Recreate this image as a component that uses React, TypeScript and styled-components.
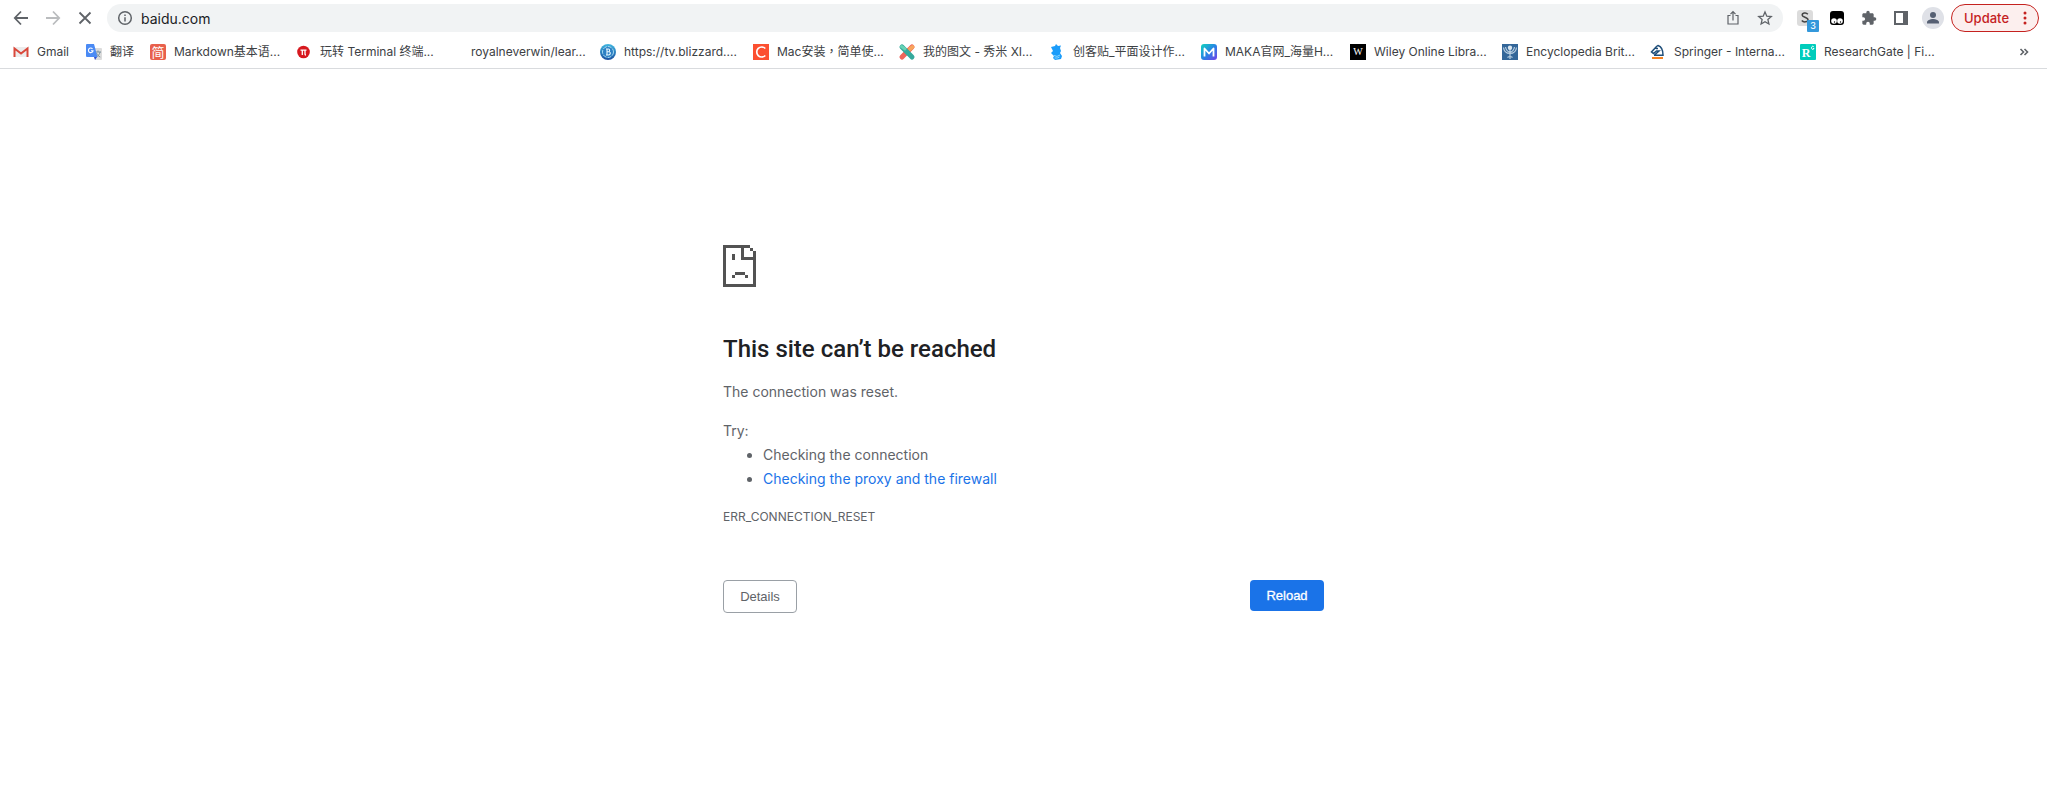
import React from "react";
import styled, { createGlobalStyle, css } from "styled-components";

const uiFont = `Inter, "Noto Sans CJK TC", sans-serif`;

const GlobalStyle = createGlobalStyle`
  *, *::before, *::after { box-sizing: border-box; }
  body { margin: 0; background: #fff; color: #3c4043; font-family: ${uiFont}; }
  button, input { font: inherit; color: inherit; margin: 0; padding: 0; border: 0; background: none; }
  a { text-decoration: none; }
  svg { display: block; flex: none; }
`;

const Page = styled.div`
  display: flex;
  flex-direction: column;
  min-height: 100vh;
`;

const Chrome = styled.header`
  border-bottom: 1px solid #d9dbde;
`;

const Toolbar = styled.div`
  display: flex;
  align-items: center;
  height: 36px;
  padding: 0 8px 0 5px;
`;

const IconButton = styled.button`
  display: flex;
  flex: none;
  align-items: center;
  justify-content: center;
  width: 32px;
  height: 28px;
  color: #5f6368;

  &:disabled {
    color: #babcbe;
  }
`;

const Omnibox = styled.div`
  display: flex;
  flex: 1;
  align-items: center;
  height: 28px;
  margin: 0 6px;
  padding: 0 2px;
  border-radius: 14px;
  background: #f1f3f4;
`;

const AddressInput = styled.input`
  flex: 1;
  min-width: 0;
  height: 28px;
  outline: none;
  font-size: 14px;
  color: #202124;
`;

const Extensions = styled.div`
  display: flex;
  margin-right: 2px;
`;

const BadgeHolder = styled(IconButton)`
  position: relative;
`;

const Badge = styled.span`
  position: absolute;
  right: 2px;
  bottom: 0;
  width: 12px;
  height: 12px;
  border-radius: 1px;
  background: #3498db;
  color: #fff;
  font-size: 9px;
  font-weight: 500;
  line-height: 12px;
  text-align: center;
`;

const UpdateButton = styled.button`
  display: flex;
  align-items: center;
  justify-content: space-between;
  width: 88px;
  height: 28px;
  padding: 0 11px 0 12px;
  border: 1px solid #c5221f;
  border-radius: 14px;
  background: #fcefee;
  color: #c5221f;
  font-size: 13px;
  font-weight: 500;
`;

const BookmarksBar = styled.nav`
  display: flex;
  align-items: center;
  height: 32px;
  padding: 0 15px 0 13px;
`;

const Bookmark = styled.a<{ $width: number }>`
  display: flex;
  flex: none;
  align-items: center;
  gap: 8px;
  width: ${(p) => p.$width}px;
  color: #3c4043;
  font-size: 12px;
  line-height: 16px;
  white-space: nowrap;
`;

const Overflow = styled(IconButton)`
  width: 16px;
  margin-left: auto;
`;

const ErrorPage = styled.main`
  width: 100%;
  max-width: 601px;
  margin: 0 auto;
  padding: 176px 0 32px;
  color: #5f6368;
  font-size: 14px;
  line-height: 24px;
`;

const Title = styled.h1`
  margin: 48px 0 17px;
  color: #202124;
  font-family: Roboto, sans-serif;
  font-size: 24px;
  font-weight: 500;
  line-height: 28px;
`;

const Paragraph = styled.p`
  margin: 0;
`;

const Suggestions = styled.section`
  margin-top: 15px;

  ul {
    margin: 0;
    padding-left: 40px;
  }

  a {
    color: #1a73e8;
  }
`;

const ErrorCode = styled.p`
  margin: 16px 0 0;
  font-size: 12px;
  line-height: 20px;
`;

const Actions = styled.div`
  display: flex;
  align-items: flex-start;
  justify-content: space-between;
  margin-top: 53px;
`;

const ActionButton = styled.button<{ $primary?: boolean }>`
  && {
    width: 74px;
    height: 33px;
    border: 1px solid #9aa0a6;
    border-radius: 4px;
    color: #5f6368;
    font-family: "Liberation Sans", Arial, sans-serif;
    font-size: 13px;
    ${(p) =>
      p.$primary &&
      css`
        height: 31px;
        border: 0;
        background: #1a73e8;
        color: #fff;
        -webkit-text-stroke: 0.3px #fff;
      `}
  }
`;

const Favicon = ({ children }: { children?: React.ReactNode }) => (
  <svg width="16" height="16" viewBox="0 0 16 16" overflow="visible" aria-hidden="true">
    {children}
  </svg>
);

const Line = ({ d }: { d: string }) => (
  <svg width="16" height="16" viewBox="0 0 16 16" fill="none" stroke="currentColor" strokeWidth="1.8" aria-hidden="true">
    <path d={d} />
  </svg>
);

const bookmarks: { label: string; width: number; icon: React.ReactNode }[] = [
  {
    label: "Gmail",
    width: 73,
    icon: (
      <>
        <path d="M1 3h14v10H1z" fill="#ececec" />
        <path d="M1.500 13V4.500L8 9.500l6.500-5V13" fill="none" stroke="#d9483b" strokeWidth="2" />
      </>
    ),
  },
  {
    label: "翻译",
    width: 64,
    icon: (
      <>
        <path d="M6 4h9a1 1 0 0 1 1 1v10a1 1 0 0 1-1 1H9z" fill="#dcdcdc" />
        <path d="M9 8h6M12 6.500V8m2 0c-.5 2.500-2 4-3.500 5M10.500 9c.8 2 2 3.200 3.800 4" fill="none" stroke="#78909c" />
        <path d="M8 13h3l-2 3z" fill="#3050d0" />
        <path d="M1 0h7l3.500 13H1a1 1 0 0 1-1-1V1a1 1 0 0 1 1-1z" fill="#4a8af4" />
        <path d="M6.500 4.800A2.300 2.300 0 1 0 7 6.800H5" fill="none" stroke="#fff" strokeWidth="1.100" />
      </>
    ),
  },
  {
    label: "Markdown基本语...",
    width: 146,
    icon: (
      <>
        <rect width="16" height="16" rx="2" fill="#e8604c" />
        <text x="8" y="13" fontSize="13" textAnchor="middle" fill="#fff" fontFamily="Noto Sans CJK SC">简</text>
      </>
    ),
  },
  {
    label: "玩转 Terminal 终端...",
    width: 151,
    icon: (
      <>
        <circle cx="7.500" cy="8" r="6.300" fill="#d7191f" />
        <path d="M4.500 6.200h6M6.300 6.200V11M9 6.200v4q0 .8 1 .8" fill="none" stroke="#fff" strokeWidth="1.300" />
      </>
    ),
  },
  { label: "royalneverwin/lear...", width: 153, icon: null },
  {
    label: "https://tv.blizzard....",
    width: 153,
    icon: (
      <>
        <defs>
          <linearGradient id="blizzard" x2="0" y2="1">
            <stop stopColor="#3fb6e0" />
            <stop offset="1" stopColor="#1b4f9f" />
          </linearGradient>
        </defs>
        <circle cx="8" cy="8" r="8" fill="url(#blizzard)" />
        <circle cx="8" cy="8" r="5.500" fill="#2d80c4" stroke="#a5daf2" strokeDasharray="4 1" />
        <path d="M6 5h2.500c1.500 0 1.500 2.800 0 2.800H7h2c1.800 0 1.800 3.200-.5 3.200H6M7 5v6" fill="none" stroke="#e9f8ff" strokeWidth="1.100" />
      </>
    ),
  },
  {
    label: "Mac安装，简单使...",
    width: 146,
    icon: (
      <>
        <rect width="16" height="16" fill="#fc4f30" />
        <path d="M12.300 4.500A5 5 0 1 0 12.300 11.500" fill="none" stroke="#fff" strokeWidth="1.700" />
      </>
    ),
  },
  {
    label: "我的图文 - 秀米 XI...",
    width: 150,
    icon: (
      <>
        <path d="m3 13 10-10" stroke="#f0645a" strokeWidth="5" strokeLinecap="round" />
        <path d="m11 5 2.500-2" stroke="#f7a45c" strokeWidth="4" strokeLinecap="round" />
        <path d="m3 3 10 10" stroke="#35a99c" strokeWidth="5" strokeLinecap="round" />
        <path d="M2.500 2.500 6 5" stroke="#66d3b4" strokeWidth="3" strokeLinecap="round" />
      </>
    ),
  },
  {
    label: "创客贴_平面设计作...",
    width: 152,
    icon: (
      <>
        <path d="m2 3 4-1 1-2 2 2 3-.5-1 2.500 1 3-1 2 2 3-1 3-6 1-2-2 1-2-3-3 2-2z" fill="#1b9cfa" />
        <path d="M5 11.500q3 2 6-.5M5.500 14q3 .5 5-1" fill="none" stroke="#a7e4ff" strokeWidth=".8" />
      </>
    ),
  },
  {
    label: "MAKA官网_海量H...",
    width: 149,
    icon: (
      <>
        <defs>
          <linearGradient id="maka" x2="1" y2="1">
            <stop stopColor="#12d5bd" />
            <stop offset=".5" stopColor="#2785e4" />
            <stop offset="1" stopColor="#7540e8" />
          </linearGradient>
        </defs>
        <rect width="16" height="16" rx="3" fill="url(#maka)" />
        <path d="M3.500 12.500V4.500L8 9.500l4.500-5v8" fill="none" stroke="#fff" strokeWidth="1.800" strokeLinejoin="round" />
      </>
    ),
  },
  {
    label: "Wiley Online Libra...",
    width: 152,
    icon: (
      <>
        <rect width="16" height="16" fill="#000" />
        <text x="8" y="11" fontSize="10" textAnchor="middle" fill="#fff" fontFamily="Liberation Serif">W</text>
      </>
    ),
  },
  {
    label: "Encyclopedia Brit...",
    width: 148,
    icon: (
      <>
        <rect width="16" height="16" fill="#336699" />
        <path d="M8 5v10M1.500 3.500C2 8 4 9.500 8 9.500s6-1.500 6.500-6M3.500 3C4 6 5 7.500 8 8.500 11 7.500 12 6 12.500 3M5.500 13.500q2.500-2 5 0" fill="none" stroke="#b9cfe2" strokeWidth="1.200" />
        <circle cx="8" cy="3.800" r="2.200" fill="#dae6ef" />
      </>
    ),
  },
  {
    label: "Springer - Interna...",
    width: 150,
    icon: (
      <>
        <path d="M2 14h11" stroke="#f58220" strokeWidth="2" />
        <path d="M4 11.200h9c0-5-1-8.500-5-9.700L6.500 2.500 1.500 8l2 1.500L6.500 7H9l-4.500 4M6 4.500h2" fill="none" stroke="#1f4e79" strokeWidth="1.500" />
      </>
    ),
  },
  {
    label: "ResearchGate | Fi...",
    width: 150,
    icon: (
      <>
        <rect width="16" height="16" rx="1" fill="#00ccbb" />
        <text x="6" y="13" fontSize="12" fontWeight="700" textAnchor="middle" fill="#fff" fontFamily="Liberation Serif">R</text>
        <path d="M13.800 2.800a1.300 1.600 0 1 0 .2 1.700h-1" fill="none" stroke="#fff" strokeWidth=".9" />
      </>
    ),
  },
];

function BrowserToolbar() {
  return (
    <Toolbar>
      <IconButton aria-label="Back">
        <Line d="M15 8H2M8 1.500 1.800 8 8 14.500" />
      </IconButton>
      <IconButton aria-label="Forward" disabled>
        <Line d="M1 8h13M8 1.500 14.200 8 8 14.500" />
      </IconButton>
      <IconButton aria-label="Stop loading">
        <Line d="m2.500 2.500 11 11m0-11-11 11" />
      </IconButton>
      <Omnibox>
        <IconButton aria-label="View site information">
          <svg width="16" height="16" viewBox="0 0 16 16" fill="none" stroke="currentColor" strokeWidth="1.500" aria-hidden="true">
            <circle cx="8" cy="8" r="6.300" />
            <path d="M8 7.200v4.300M8 4.500V6" />
          </svg>
        </IconButton>
        <AddressInput aria-label="Address" defaultValue="baidu.com" />
        <IconButton aria-label="Share">
          <svg width="16" height="16" viewBox="0 0 16 16" fill="none" stroke="currentColor" strokeWidth="1.200" aria-hidden="true">
            <path d="M5.500 5.500h-2.500v8.500h10V5.500h-2.500M8 10.500V2M5.500 4.200 8 1.700l2.500 2.500" />
          </svg>
        </IconButton>
        <IconButton aria-label="Bookmark this tab">
          <svg width="16" height="16" viewBox="0 0 16 16" fill="none" stroke="currentColor" strokeWidth="1.300" aria-hidden="true">
            <path d="m8 2 1.800 4.200 4.500.4-3.400 3 1 4.400L8 11.700 4.100 14l1-4.400-3.400-3 4.500-.4z" />
          </svg>
        </IconButton>
      </Omnibox>
      <Extensions>
        <BadgeHolder aria-label="Extension, 3 items">
          <svg width="16" height="16" viewBox="0 0 16 16" aria-hidden="true">
            <rect width="16" height="16" rx="3" fill="#dcdcdc" />
            <path d="M10.800 4.200C9 2 5 3 5.200 5.300 5.400 7.500 11 7 11 9.700c0 2.400-4.500 3-6.200.8" fill="none" stroke="#444" strokeWidth="1.500" />
          </svg>
          <Badge>3</Badge>
        </BadgeHolder>
        <IconButton aria-label="Tampermonkey">
          <svg width="14" height="14" viewBox="0 0 14 14" aria-hidden="true">
            <rect width="14" height="14" rx="3" fill="#000" />
            <circle cx="4" cy="10" r="2.800" fill="#fff" />
            <circle cx="10" cy="10" r="2.800" fill="#fff" />
            <circle cx="4.500" cy="11" r=".7" />
            <circle cx="10.500" cy="11" r=".7" />
          </svg>
        </IconButton>
        <IconButton aria-label="Extensions">
          <svg width="16" height="16" viewBox="0 0 24 24" fill="currentColor" aria-hidden="true">
            <path d="M20.500 11H19V7c0-1.100-.9-2-2-2h-4V3.500a2.500 2.500 0 0 0-5 0V5H4c-1.100 0-2 .9-2 2v3.800h1.500a2.700 2.700 0 0 1 0 5.400H2V20c0 1.100.9 2 2 2h3.800v-1.500a2.700 2.700 0 0 1 5.400 0V22H17c1.100 0 2-.9 2-2v-4h1.500a2.500 2.500 0 0 0 0-5z" />
          </svg>
        </IconButton>
        <IconButton aria-label="Side panel">
          <svg width="14" height="14" viewBox="0 0 14 14" aria-hidden="true">
            <path fill="currentColor" fillRule="evenodd" d="M0 0h14v14H0zM2 2v10h7V2z" />
          </svg>
        </IconButton>
        <IconButton aria-label="Profile">
          <svg width="22" height="22" viewBox="0 0 22 22" aria-hidden="true">
            <circle cx="11" cy="11" r="11" fill="#dfe1e7" />
            <circle cx="11" cy="8" r="3" fill="#566073" />
            <path d="M5 16.500v-1.200c0-2 3.500-3.300 6-3.300s6 1.300 6 3.300v1.200z" fill="#566073" />
          </svg>
        </IconButton>
      </Extensions>
      <UpdateButton>
        Update
        <svg width="4" height="14" viewBox="0 0 4 14" fill="currentColor" aria-hidden="true">
          <circle cx="2" cy="2" r="1.500" />
          <circle cx="2" cy="7" r="1.500" />
          <circle cx="2" cy="12" r="1.500" />
        </svg>
      </UpdateButton>
    </Toolbar>
  );
}

export default function App() {
  return (
    <Page>
      <GlobalStyle />
      <Chrome>
        <BrowserToolbar />
        <BookmarksBar aria-label="Bookmarks">
          {bookmarks.map((b) => (
            <Bookmark key={b.label} href="#" $width={b.width}>
              <Favicon>{b.icon}</Favicon>
              {b.label}
            </Bookmark>
          ))}
          <Overflow aria-label="More bookmarks">
            <svg width="10" height="8" viewBox="0 0 10 8" fill="none" stroke="currentColor" strokeWidth="1.600" aria-hidden="true">
              <path d="m1.500 1 3 3-3 3M5.500 1l3 3-3 3" />
            </svg>
          </Overflow>
        </BookmarksBar>
      </Chrome>
      <ErrorPage>
        <svg width="33" height="42" viewBox="0 0 33 42" fill="#535353" shapeRendering="crispEdges" aria-hidden="true">
          <path d="M0 0h27v3H21v9h9V6h3v36H0zM3 3v36h27V15H18V3z" fillRule="evenodd" />
          <path d="M27 3h3v3h-3zM9 9h3v6H9zM12 27h10v3H12zM9 30h3v3H9zM22 30h3v3h-3z" />
        </svg>
        <Title>This site can’t be reached</Title>
        <Paragraph>The connection was reset.</Paragraph>
        <Suggestions>
          <Paragraph>Try:</Paragraph>
          <ul>
            <li>Checking the connection</li>
            <li>
              <a href="#">Checking the proxy and the firewall</a>
            </li>
          </ul>
        </Suggestions>
        <ErrorCode>ERR_CONNECTION_RESET</ErrorCode>
        <Actions>
          <ActionButton>Details</ActionButton>
          <ActionButton $primary>Reload</ActionButton>
        </Actions>
      </ErrorPage>
    </Page>
  );
}
